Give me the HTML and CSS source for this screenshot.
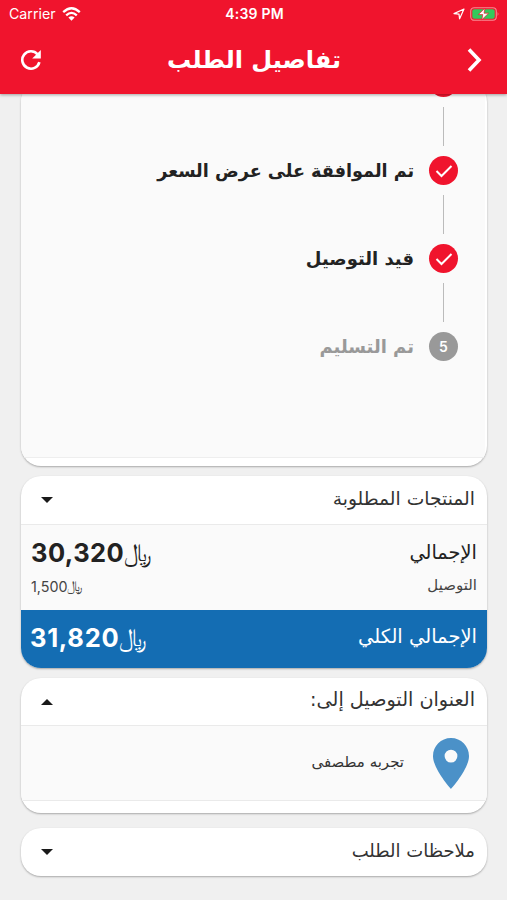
FILE: index.html
```
<!DOCTYPE html>
<html lang="ar" dir="rtl">
<head>
<meta charset="utf-8">
<title>تفاصيل الطلب</title>
<link rel="stylesheet" href="styles.css">
</head>
<body>
<div class="screen">
  <header class="header">
    <div class="status" dir="ltr">
      <div class="carrier"><span>Carrier</span>
        <svg width="19" height="14" viewBox="0 0 19 14"><g fill="none" stroke="#fff" stroke-width="2.3"><path d="M1.2 5.2Q9.5-2.6 17.8 5.2"/><path d="M4.2 8.4Q9.5 3.4 14.8 8.4"/></g><path d="M6.4 10.6Q9.5 7.8 12.6 10.6L9.5 13.8Z" fill="#fff"/></svg>
      </div>
      <span class="clock">4:39 PM</span>
      <div class="power">
        <svg width="12" height="12" viewBox="0 0 12 12"><path d="M1 5.6L11 1L6.6 10.8L6 6.2Z" fill="none" stroke="#fff" stroke-width="1.2" stroke-linejoin="round"/></svg>
        <svg width="30" height="14" viewBox="0 0 30 14"><rect x=".7" y=".7" width="25.6" height="12.6" rx="3.5" fill="none" stroke="#f88a93" stroke-width="1.1"/><rect x="2.3" y="2.3" width="22.4" height="9.4" rx="2" fill="#35c95b"/><path d="M27.6 4.8Q29.4 7 27.6 9.2Z" fill="#f88a93"/><path d="M15 1.2L8.3 7.6H12.8L11.8 12.8L18.6 6.2H14Z" fill="#fff" stroke="#f0142d" stroke-width=".7"/></svg>
      </div>
    </div>
    <div class="titlebar">
      <svg width="17" height="26" viewBox="0 0 17 26"><path d="M3 2.5L13 13L3 23.5" fill="none" stroke="#fff" stroke-width="3.6"/></svg>
      <h1><span class="t t-title">تفاصيل الطلب</span></h1>
      <svg width="22" height="22" viewBox="0 0 22 22"><path d="M17.6 5.3A8.7 8.7 0 1 0 19.4 13.2" fill="none" stroke="#fff" stroke-width="2.6"/><path d="M20.8 1V9.6H12.2Z" fill="#fff"/></svg>
    </div>
  </header>
  <main class="content">
    <section class="card tracking">
      <div class="tracking-body">
        <div class="step"><i class="dot"></i><b class="t">تم</b></div>
        <div class="rail"></div>
        <div class="step"><i class="dot"><svg width="20" height="16" viewBox="0 0 20 16"><path d="M2.5 8L7.5 13L17.5 3" fill="none" stroke="#fff" stroke-width="2"/></svg></i><b class="t t-approved">تم الموافقة على عرض السعر</b></div>
        <div class="rail"></div>
        <div class="step"><i class="dot"><svg width="20" height="16" viewBox="0 0 20 16"><path d="M2.5 8L7.5 13L17.5 3" fill="none" stroke="#fff" stroke-width="2"/></svg></i><b class="t">قيد التوصيل</b></div>
        <div class="rail"></div>
        <div class="step pending"><i class="dot">5</i><b class="t">تم التسليم</b></div>
      </div>
    </section>
    <section class="card products">
      <div class="card-head"><span class="t t-prod">المنتجات المطلوبة</span><i class="caret"></i></div>
      <div class="totals">
        <div class="line subtotal"><span class="t">الإجمالي</span><span class="money big" dir="ltr"><b>30,320</b><span class="cur">﷼</span></span></div>
        <div class="line shipping"><span class="t t-ship">التوصيل</span><span class="money small" dir="ltr"><span>1,500</span><span class="cur">﷼</span></span></div>
      </div>
      <div class="line grand"><span class="t">الإجمالي الكلي</span><span class="money big" dir="ltr"><b>31,820</b><span class="cur">﷼</span></span></div>
    </section>
    <section class="card address">
      <div class="card-head"><span class="t t-addr">العنوان التوصيل إلى:</span><i class="caret up"></i></div>
      <div class="place">
        <svg width="36" height="51" viewBox="0 0 36 51"><path fill-rule="evenodd" d="M18 0C8 0 0 8 0 18C0 31 18 51 18 51S36 31 36 18C36 8 28 0 18 0ZM18 11.7A6.4 6.4 0 1 1 18 24.5A6.4 6.4 0 1 1 18 11.7Z" fill="#4b91c8"/></svg>
        <span class="t">تجربه مطصفى</span>
      </div>
    </section>
    <section class="card notes">
      <div class="card-head"><span class="t">ملاحظات الطلب</span><i class="caret"></i></div>
    </section>
  </main>
</div>
</body>
</html>
```
FILE: styles.css
```
* { box-sizing: border-box; }
body { margin: 0; background: #f0f0f0; color: #222; font-family: Inter, "DejaVu Sans", sans-serif; }
svg { display: block; flex: none; }
.screen { height: 900px; overflow: hidden; display: flex; flex-direction: column; }
.t { display: block; white-space: nowrap; font-family: "DejaVu Sans", sans-serif; transform-origin: right center; }

.header { flex: none; position: relative; z-index: 1; height: 94px; background: #f0142d; color: #fff; box-shadow: 0 1px 3px rgba(0,0,0,.35); }
.status { display: grid; grid-template-columns: 1fr auto 1fr; align-items: center; height: 27px; padding: 0 7px 0 9px; }
.carrier { display: flex; align-items: center; gap: 6px; font-size: 14.2px; }
.clock { font-size: 14px; font-weight: 600; letter-spacing: .2px; }
.power { display: flex; align-items: center; justify-content: flex-end; gap: 5px; }
.titlebar { display: flex; align-items: center; justify-content: space-between; height: 65px; padding: 0 24px 0 20px; }
h1 { margin: 0; font-size: 24px; line-height: 40px; }

.content { display: flex; flex-direction: column; padding: 0 20px 0 21px; }
.card { flex: none; background: #fff; border-radius: 20px; box-shadow: 0 1px 2px rgba(0,0,0,.3); overflow: hidden; }
.tracking { height: 383.5px; margin-top: -12px; padding: 0 2px 8px 0; }
.tracking-body { display: flow-root; height: 376px; padding: 0 27px; background: #fafafa; border-bottom: 1px solid #eee; }
.step { display: flex; align-items: center; gap: 15px; height: 29px; font-size: 18px; }
.step:first-child { margin-top: -14px; }
.t-approved { transform: scaleX(.98); }
.dot { display: flex; align-items: center; justify-content: center; width: 29px; height: 29px; border-radius: 50%; background: #f0142d; color: #fff; font: 600 14px Inter, sans-serif; }
.rail { width: 1px; height: 39px; margin: 10px 14px; background: #bbb; }
.pending { color: #999; }
.pending .dot { background: #999; }

.products { height: 191.5px; margin-top: 10.5px; }
.card-head { display: flex; align-items: center; justify-content: space-between; height: 48px; padding: 0 12px 0 20px; color: #333; font-size: 18px; }
.card-head .t { margin-top: -4px; }
.t-prod { font-size: 18.7px; }
.t-addr { font-size: 19.2px; }
.caret { border: 6px solid transparent; border-top-color: #1a1a1a; border-bottom: 0; }
.caret.up { border-top: 0; border-bottom: 6px solid #1a1a1a; }
.totals { height: 86px; padding-top: 10px; background: #fafafa; border-top: 1px solid #eaeaea; }
.line { display: flex; align-items: center; justify-content: space-between; padding: 0 10px; }
.subtotal { height: 34px; font-size: 19.4px; }
.shipping { height: 34px; font-size: 15px; color: #444; }
.shipping .t { margin-top: -2px; }
.grand { height: 57.5px; padding-left: 9px; background: #146db3; color: #fff; font-size: 19.5px; }
.grand .t { margin-top: -4px; }
.grand .money { margin-top: -2px; }
.money { display: flex; align-items: center; }
.big { font-size: 25.5px; }
.big b { letter-spacing: .45px; }
.grand .big b { letter-spacing: .7px; }
.big .cur { font-size: 24.5px; }
.small { font-size: 14.3px; }
.cur { font-family: "DejaVu Sans", sans-serif; }

.address { height: 135px; margin-top: 10.5px; }
.address .card-head { height: 47px; }
.place { display: flex; align-items: center; gap: 29px; height: 76px; padding: 0 18px; background: #fafafa; border: solid #eaeaea; border-width: 1px 0; color: #333; font-size: 15px; }
.place .t { margin-top: -3px; }
.notes { height: 47.5px; margin-top: 15px; }
```
